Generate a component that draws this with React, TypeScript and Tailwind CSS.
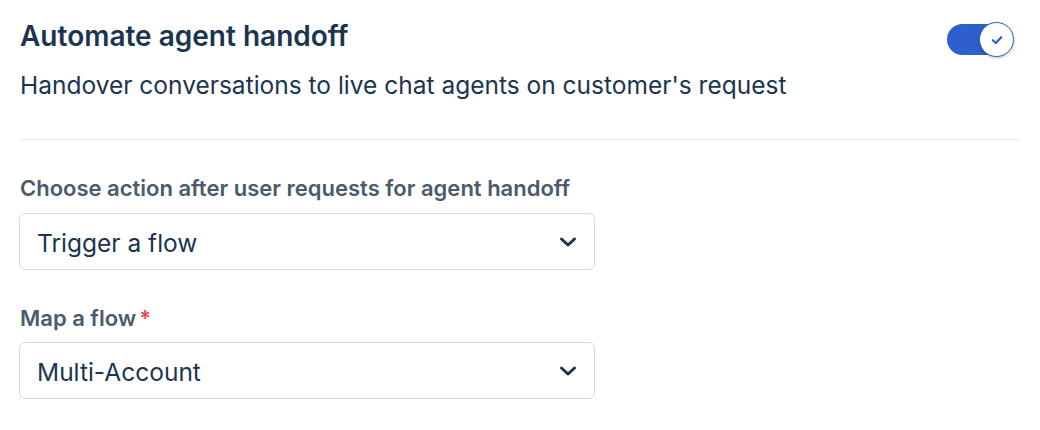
import React, { useState } from 'react';

const ChevronDown: React.FC = () => (
  <svg width="18" height="12" viewBox="0 0 18 12" fill="none">
    <path d="M2.5 3l6.5 6 6.5-6" stroke="#1b3550" strokeWidth="3" strokeLinecap="round" strokeLinejoin="round" />
  </svg>
);

const SelectBox: React.FC<{ value: string }> = ({ value }) => (
  <div className="flex h-[57px] w-[576px] items-center justify-between rounded-[6px] border border-[#d3dae2] bg-white pl-[17px] pr-[17px]">
    <span className="pt-[2px] text-[24.5px] leading-[30px] text-[#1b3550]">{value}</span>
    <ChevronDown />
  </div>
);

export default function App() {
  const [enabled, setEnabled] = useState(true);

  return (
    <div className="min-h-[430px] w-[1040px] bg-white pl-[19px] pr-5 pt-[19px] font-['Inter',sans-serif]">
      <div className="flex items-start justify-between pl-px">
        <div>
          <h2 className="text-[28px] font-semibold leading-[34px] text-[#1b3550]">Automate agent handoff</h2>
          <p className="mt-[17px] text-[24.5px] leading-[30px] text-[#1b3550]">
            Handover conversations to live chat agents on customer's request
          </p>
        </div>
        <button
          onClick={() => setEnabled(!enabled)}
          className="relative mr-[10px] mt-[5px] h-[31px] w-[63px] rounded-full bg-[#2e5fcb]"
        >
          <span className="absolute right-[-4px] top-[-2px] flex h-[35px] w-[35px] items-center justify-center rounded-full border-[1.5px] border-[#2e5fcb] bg-white shadow-[0_1px_3px_rgba(0,0,0,0.25)]">
            <svg width="12" height="10" viewBox="0 0 12 10" fill="none">
              <path d="M1.8 5.2l3 2.8L10.2 2.2" stroke="#2e5fcb" strokeWidth="2.2" strokeLinecap="round" strokeLinejoin="round" />
            </svg>
          </span>
        </button>
      </div>

      <div className="ml-px mt-[39px] h-px bg-[#e8ecf0]" />

      <div className="mt-[34px]">
        <label className="block pl-px text-[22px] font-semibold leading-[28px] text-[#4a5b6b]">
          Choose action after user requests for agent handoff
        </label>
        <div className="mt-[11px]">
          <SelectBox value="Trigger a flow" />
        </div>
      </div>

      <div className="mt-[34px]">
        <label className="block pl-px text-[22px] font-semibold leading-[28px] text-[#4a5b6b]">
          Map a flow<span className="ml-[3px] text-[#e5484d]">*</span>
        </label>
        <div className="mt-[10px]">
          <SelectBox value="Multi-Account" />
        </div>
      </div>
    </div>
  );
}
